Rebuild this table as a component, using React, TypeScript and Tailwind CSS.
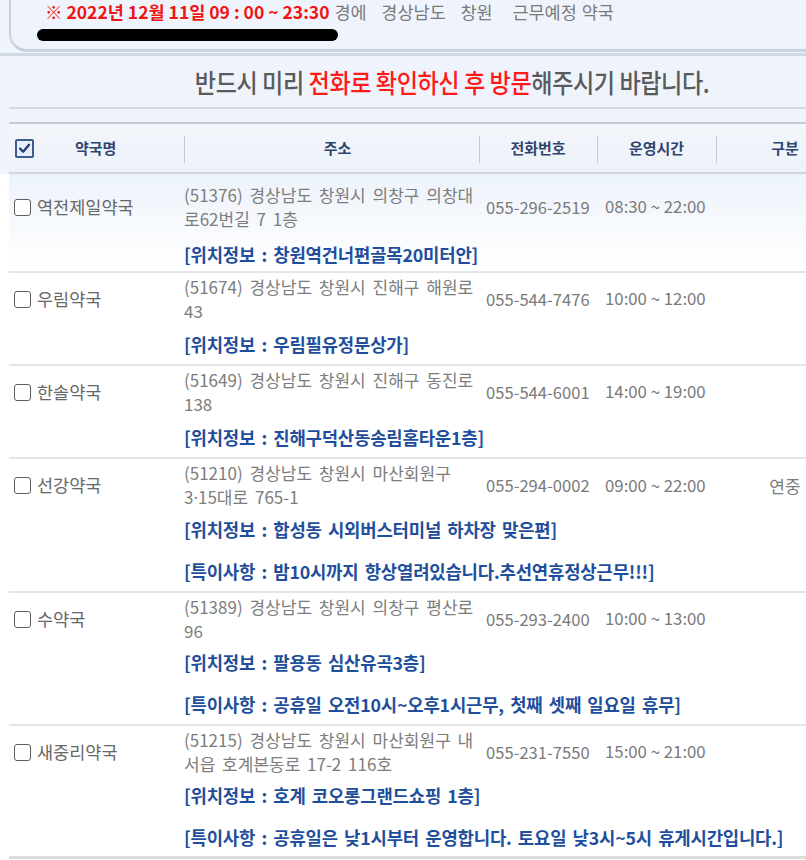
const FONT = "font-['Noto_Sans_CJK_KR','Noto_Sans',sans-serif]";

type Row = {
  name: string;
  addr: [string, string];
  tel: string;
  time: string;
  kind?: string;
  loc: string;
  note?: string;
};

const ROWS: Row[] = [
  {
    name: "역전제일약국",
    addr: ["(51376) 경상남도 창원시 의창구 의창대", "로62번길 7 1층"],
    tel: "055-296-2519",
    time: "08:30 ~ 22:00",
    loc: "창원역건너편골목20미터안",
  },
  {
    name: "우림약국",
    addr: ["(51674) 경상남도 창원시 진해구 해원로", "43"],
    tel: "055-544-7476",
    time: "10:00 ~ 12:00",
    loc: "우림필유정문상가",
  },
  {
    name: "한솔약국",
    addr: ["(51649) 경상남도 창원시 진해구 동진로", "138"],
    tel: "055-544-6001",
    time: "14:00 ~ 19:00",
    loc: "진해구덕산동송림홈타운1층",
  },
  {
    name: "선강약국",
    addr: ["(51210) 경상남도 창원시 마산회원구", "3·15대로 765-1"],
    tel: "055-294-0002",
    time: "09:00 ~ 22:00",
    kind: "연중",
    loc: "합성동 시외버스터미널 하차장 맞은편",
    note: "밤10시까지 항상열려있습니다.추선연휴정상근무!!!",
  },
  {
    name: "수약국",
    addr: ["(51389) 경상남도 창원시 의창구 평산로", "96"],
    tel: "055-293-2400",
    time: "10:00 ~ 13:00",
    loc: "팔용동 심산유곡3층",
    note: "공휴일 오전10시~오후1시근무, 첫째 셋째 일요일 휴무",
  },
  {
    name: "새중리약국",
    addr: ["(51215) 경상남도 창원시 마산회원구 내", "서읍 호계본동로 17-2 116호"],
    tel: "055-231-7550",
    time: "15:00 ~ 21:00",
    loc: "호계 코오롱그랜드쇼핑 1층",
    note: "공휴일은 낮1시부터 운영합니다. 토요일 낮3시~5시 휴게시간입니다.",
  },
];

const COLS = "grid grid-cols-[175px_295px_118px_119px_138px]";

function HeadSep() {
  return <span className="absolute left-0 top-[12px] h-[27px] w-px bg-[#c3cad4]" />;
}

// the middle dot is full width in the CJK face, so draw it in a latin one
function Addr2({ text }: { text: string }) {
  if (!text.includes("·")) return <>{text}</>;
  const [a, b] = text.split("·");
  return (
    <>
      {a}
      <span className="font-['Noto_Sans']">·</span>
      {b}
    </>
  );
}

function TableRow({ row, first, last }: { row: Row; first: boolean; last: boolean }) {
  let pad = "bg-white pt-[2px] pb-[8px]";
  if (first) pad = "bg-gradient-to-b from-[#edf3fb] to-white pt-[9px] pb-[5px]";
  else if (row.note) pad = last ? "bg-white pt-[2px] pb-[7px]" : "bg-white pt-[2px] pb-[8px]";
  return (
    <div
      className={[
        last ? "border-b-[3px] border-[#dcdcdc]" : "border-b-2 border-[#e3e5e9]",
        pad,
      ].join(" ")}
    >
      <div className={`${COLS} items-center`}>
        <div className="flex items-center gap-[6px] pl-[5px]">
          <span className="h-[17px] w-[17px] rounded-[3px] border-[1.5px] border-[#5d5d5d] bg-white" />
          <span className="text-[17.5px] text-[#676767]">{row.name}</span>
        </div>
        <div className="text-[17px] leading-[24px] text-[#7d7d7d] whitespace-nowrap [word-spacing:3px]">
          <div>{row.addr[0]}</div>
          <div>
            <Addr2 text={row.addr[1]} />
          </div>
        </div>
        <div className="pl-[7px] text-[16.6px] text-[#7a7a7a] whitespace-nowrap">{row.tel}</div>
        <div className="pl-[8px] text-[16.8px] text-[#7a7a7a] whitespace-nowrap">{row.time}</div>
        <div className="text-center text-[17px] text-[#7a7a7a]">{row.kind}</div>
      </div>
      <div className="pl-[175px] text-[17.8px] font-bold leading-[24px] tracking-[-0.2px] text-[#1f4f9c] whitespace-nowrap [word-spacing:2.4px]">
        <div className={first ? "mt-[11px]" : row.note ? "mt-[7px]" : "mt-[9px]"}>
          [위치정보 : {row.loc}]
        </div>
        {row.note && <div className="mt-[18px]">[특이사항 : {row.note}]</div>}
      </div>
    </div>
  );
}

export default function App() {
  return (
    <div className={`w-[806px] h-[860px] overflow-hidden bg-white ${FONT}`}>
      <div className="w-[904px]">
        <div className="bg-[#eff4fc]">
          <div className="ml-[9px] h-[52px] rounded-bl-[18px] border-b-[3px] border-l-2 border-[#c8d3e0] pl-[34px] pt-[1px]">
            <div className="whitespace-pre text-[17.5px] leading-[22px]">
              <span className="font-bold text-[#f01414]">※ 2022년 12월 11일 09 : 00 ~ 23:30</span>
              <span className="text-[#7a7a7a] [word-spacing:1px]"> 경에   경상남도   창원    근무예정 약국</span>
            </div>
            <div className="ml-[-8px] mt-[6px] h-[12px] w-[301px] rounded-full bg-black" />
          </div>
          <div className="mt-[1px] h-[3px] bg-[#cfd8e3]" />
          <div className="flex h-[51px] items-center justify-center">
            <span className="inline-block scale-x-[0.89] whitespace-nowrap text-[26px] font-medium tracking-[-0.5px] text-[#5a5a5a]">
              반드시 미리 <span className="text-[#ff1a1a]">전화로 확인하신 후 방문</span>해주시기 바랍니다.
            </span>
          </div>
          <div className="ml-[9px] h-[2px] bg-[#d4d9df]" />
          <div className="h-[13px]" />
          <div className="ml-[9px] border-y-2 border-t-[#c4ccd6] border-b-[#d0d6de] bg-gradient-to-b from-[#f3f6fb] to-[#edf2f9]">
            <div className={`${COLS} h-[48px] items-center text-[15px] font-bold text-[#2f456d]`}>
              <div className="relative flex h-full items-center">
                <span className="ml-[6px] flex h-[19px] w-[19px] items-center justify-center rounded-[2px] border-2 border-[#3d5c8f] bg-[#e9eff8]">
                  <svg viewBox="0 0 12 12" className="h-[13px] w-[13px]">
                    <path d="M2 6.2 L4.8 9 L10.2 2.6" fill="none" stroke="#22407a" strokeWidth="2.2" strokeLinecap="round" strokeLinejoin="round" />
                  </svg>
                </span>
                <span className="ml-[41px]">약국명</span>
              </div>
              <div className="relative flex h-full items-center justify-center pl-[12px]">
                <HeadSep />
                주소
              </div>
              <div className="relative flex h-full items-center justify-center">
                <HeadSep />
                전화번호
              </div>
              <div className="relative flex h-full items-center justify-center">
                <HeadSep />
                운영시간
              </div>
              <div className="relative flex h-full items-center justify-center">
                <HeadSep />
                구분
              </div>
            </div>
          </div>
        </div>
        <div className="ml-[9px]">
          {ROWS.map((r, i) => (
            <TableRow key={r.name} row={r} first={i === 0} last={i === ROWS.length - 1} />
          ))}
        </div>
      </div>
    </div>
  );
}
